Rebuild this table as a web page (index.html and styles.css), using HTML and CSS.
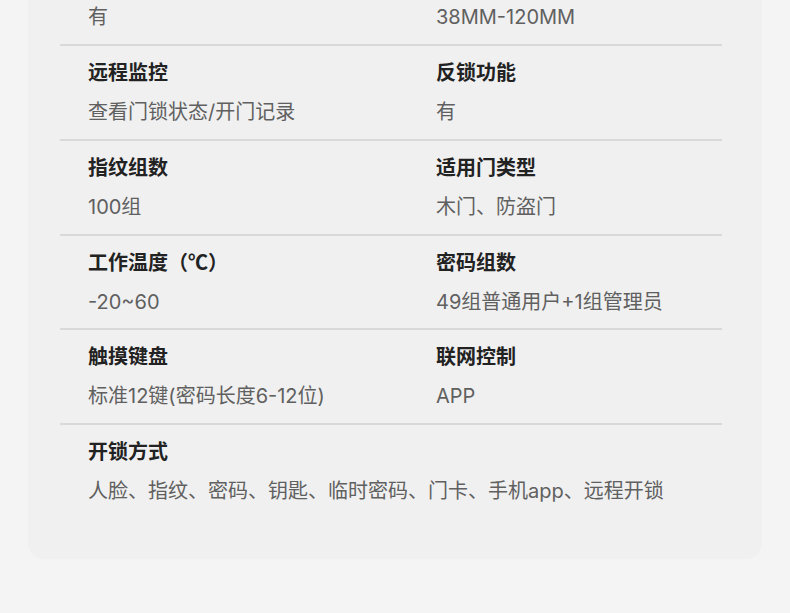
FILE: index.html
```html
<!DOCTYPE html>
<html lang="zh-CN">
<head>
<meta charset="utf-8">
<link rel="stylesheet" href="styles.css">
</head>
<body>
<div class="page">
  <section class="card">
    <div class="specs">
      <div class="row row-first">
        <div class="cell"><div class="value">有</div></div>
        <div class="cell"><div class="value">38MM-120MM</div></div>
      </div>
      <div class="row">
        <div class="cell"><div class="label">远程监控</div><div class="value">查看门锁状态/开门记录</div></div>
        <div class="cell"><div class="label">反锁功能</div><div class="value">有</div></div>
      </div>
      <div class="row">
        <div class="cell"><div class="label">指纹组数</div><div class="value">100组</div></div>
        <div class="cell"><div class="label">适用门类型</div><div class="value">木门、防盗门</div></div>
      </div>
      <div class="row">
        <div class="cell"><div class="label">工作温度（℃）</div><div class="value">-20~60</div></div>
        <div class="cell"><div class="label">密码组数</div><div class="value">49组普通用户+1组管理员</div></div>
      </div>
      <div class="row">
        <div class="cell"><div class="label">触摸键盘</div><div class="value">标准12键(密码长度6-12位)</div></div>
        <div class="cell"><div class="label">联网控制</div><div class="value">APP</div></div>
      </div>
      <div class="row row-last">
        <div class="cell cell-wide"><div class="label">开锁方式</div><div class="value">人脸、指纹、密码、钥匙、临时密码、门卡、手机app、远程开锁</div></div>
      </div>
    </div>
  </section>
</div>
</body>
</html>
```

FILE: styles.css
```css
html, body {
  margin: 0;
  padding: 0;
  background: #f4f4f4;
}
body {
  font-family: "Noto Sans CJK SC", "Noto Sans", sans-serif;
  width: 790px;
  height: 613px;
  overflow: hidden;
}
.page {
  padding: 0 28px;
}
.card {
  background: #f0f0f0;
  border-radius: 0 0 16px 16px;
  padding: 0 40px 54px 32px;
}
.specs {
  display: flex;
  flex-direction: column;
}
.row {
  display: grid;
  grid-template-columns: 348px 1fr;
  padding: 12px 0 12.75px 28px;
  border-top: 2px solid #d9d9d9;
}
.row-first {
  border-top: none;
  padding-top: 3px;
  padding-bottom: 13px;
}
.row-last {
  padding-bottom: 0;
}
.cell-wide {
  grid-column: 1 / -1;
}
.label {
  font-size: 20px;
  line-height: 28px;
  font-weight: 700;
  color: #222222;
  margin-bottom: 12px;
  white-space: nowrap;
}
.value {
  font-family: "Inter", "Noto Sans CJK SC", sans-serif;
  font-size: 20px;
  line-height: 28px;
  color: #606060;
  white-space: nowrap;
}
```
